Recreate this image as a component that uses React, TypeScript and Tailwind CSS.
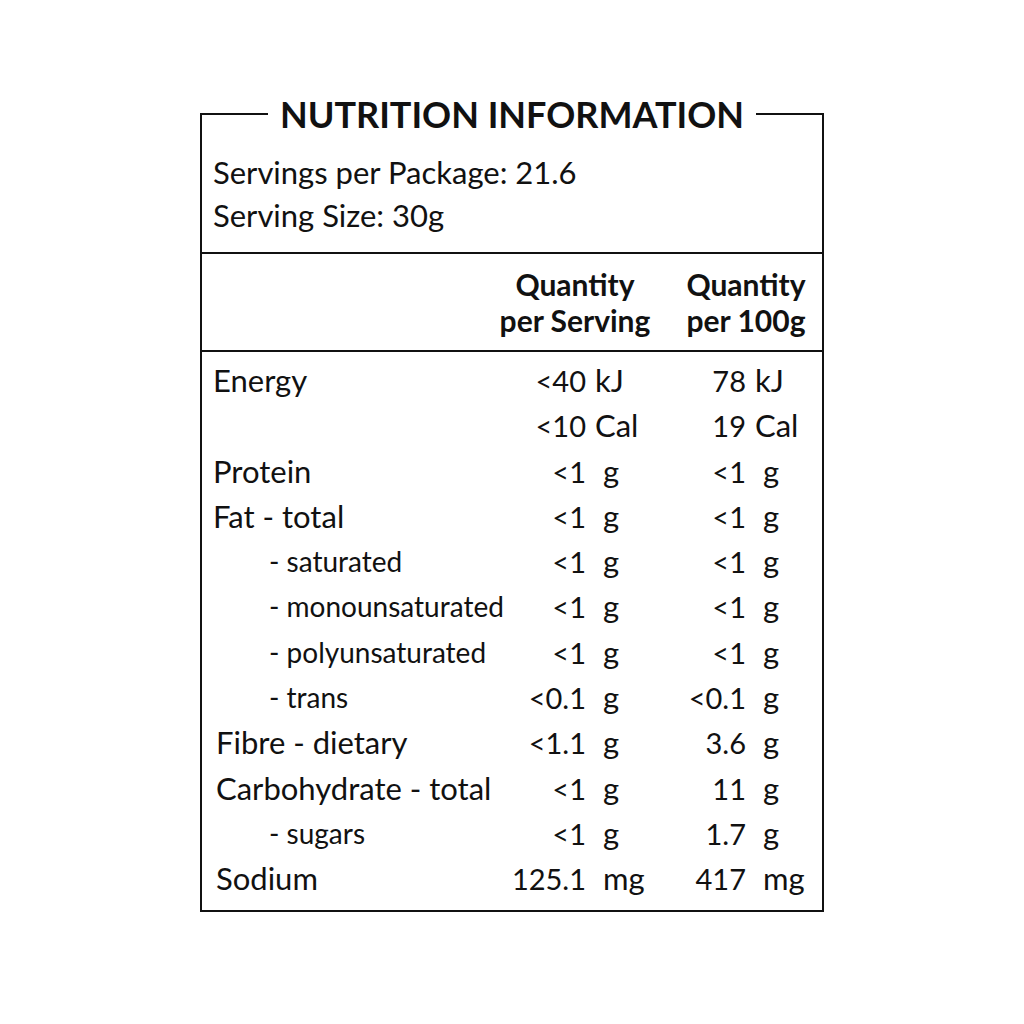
const rows = [
  { label: "Energy", a: "<40", au: "kJ", b: "78", bu: "kJ", energy: true },
  { label: "", a: "<10", au: "Cal", b: "19", bu: "Cal", energy: true },
  { label: "Protein", a: "<1", au: "g", b: "<1", bu: "g" },
  { label: "Fat - total", a: "<1", au: "g", b: "<1", bu: "g" },
  { label: "- saturated", a: "<1", au: "g", b: "<1", bu: "g", sub: true },
  { label: "- monounsaturated", a: "<1", au: "g", b: "<1", bu: "g", sub: true },
  { label: "- polyunsaturated", a: "<1", au: "g", b: "<1", bu: "g", sub: true },
  { label: "- trans", a: "<0.1", au: "g", b: "<0.1", bu: "g", sub: true },
  { label: "Fibre - dietary", a: "<1.1", au: "g", b: "3.6", bu: "g", shift: true },
  { label: "Carbohydrate - total", a: "<1", au: "g", b: "11", bu: "g", shift: true },
  { label: "- sugars", a: "<1", au: "g", b: "1.7", bu: "g", sub: true },
  { label: "Sodium", a: "125.1", au: "mg", b: "417", bu: "mg", shift: true },
];

export default function App() {
  return (
    <div className="w-full h-[1024px] bg-white flex justify-center pt-[94px] text-[#111] font-['Lato',sans-serif]">
      <fieldset className="w-[624px] h-[818px] border-[2.5px] border-[#111] flex flex-col">
        <legend className="mx-auto px-[12px] text-[36px] leading-[40px] font-bold whitespace-nowrap">
          NUTRITION INFORMATION
        </legend>
        <div className="pl-[11px] pt-[17px] pb-[15px] text-[31px] leading-[43px] border-b-[2.5px] border-[#111] whitespace-nowrap">
          <div>Servings per Package: 21.6</div>
          <div>Serving Size: 30g</div>
        </div>
        <div className="flex py-[12px] text-[30px] leading-[36px] font-bold border-b-[2.5px] border-[#111] whitespace-nowrap">
          <div className="w-[277px]" />
          <div className="w-[192px] text-center">
            <div>Quantity</div>
            <div>per Serving</div>
          </div>
          <div className="w-[150px] text-center">
            <div>Quantity</div>
            <div>per 100g</div>
          </div>
        </div>
        <div className="pt-[6px] text-[31px] leading-[45.3px] whitespace-nowrap">
          {rows.map((r, i) => (
            <div key={i} className="flex">
              <div
                className={
                  r.sub ? "w-[277px] pl-[67px] text-[28px]" : r.shift ? "w-[277px] pl-[14px]" : "w-[277px] pl-[11px]"
                }
              >
                {r.label}
              </div>
              <div className="w-[107px] text-right text-[29px]">{r.a}</div>
              <div className={r.energy ? "w-[100px] pl-[9px]" : "w-[100px] pl-[17px]"}>{r.au}</div>
              <div className="w-[60px] text-right text-[29px]">{r.b}</div>
              <div className={r.energy ? "flex-1 pl-[9px]" : "flex-1 pl-[17px]"}>{r.bu}</div>
            </div>
          ))}
        </div>
      </fieldset>
    </div>
  );
}
